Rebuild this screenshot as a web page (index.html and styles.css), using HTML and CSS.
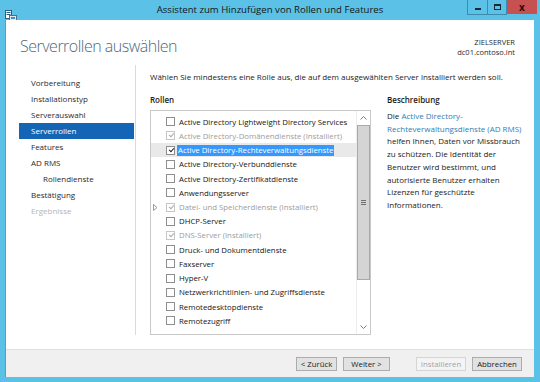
FILE: index.html
```html
<!DOCTYPE html>
<html lang="de">
<head>
    <meta charset="UTF-8">
    <meta name="viewport" content="width=device-width, initial-scale=1.0">
    <title>Assistent zum Hinzufügen von Rollen und Features</title>
    <link rel="stylesheet" href="styles.css">
</head>
<body>
    <div class="window">
        <div class="titlebar">
            <div class="app-icon">
                <svg width="12" height="11" viewBox="0 0 12 11">
                    <rect x="0.5" y="0.5" width="6" height="8" fill="#ffffff" stroke="#2a5f86"/>
                    <rect x="1.5" y="2" width="4" height="1" fill="#2a5f86"/>
                    <rect x="1.5" y="4" width="4" height="1" fill="#2a5f86"/>
                    <rect x="4.5" y="5.5" width="7" height="5" fill="#e8e8e8" stroke="#4b6f8c"/>
                    <rect x="6" y="7" width="4" height="2" fill="#3d8fc9"/>
                </svg>
            </div>
            <div class="title">Assistent zum Hinzufügen von Rollen und Features</div>
            <div class="caption-buttons">
                <span class="cap-btn cap-min"><i></i></span>
                <span class="cap-btn cap-max"><i></i></span>
                <span class="cap-btn cap-close">x</span>
            </div>
        </div>

        <div class="client">
            <div class="header">
                <h1>Serverrollen auswählen</h1>
                <div class="target">
                    <div>ZIELSERVER</div>
                    <div>dc01.contoso.int</div>
                </div>
            </div>

            <div class="main">
                <ul class="nav">
                    <li>Vorbereitung</li>
                    <li>Installationstyp</li>
                    <li>Serverauswahl</li>
                    <li class="active">Serverrollen</li>
                    <li>Features</li>
                    <li>AD RMS</li>
                    <li class="sub">Rollendienste</li>
                    <li>Bestätigung</li>
                    <li class="disabled">Ergebnisse</li>
                </ul>

                <div class="content">
                    <p class="intro">Wählen Sie mindestens eine Rolle aus, die auf dem ausgewählten Server installiert werden soll.</p>
                    <div class="columns">
                        <div class="roles">
                            <div class="section-label">Rollen</div>
                            <div class="listbox">
                                <ul class="role-list">
                                    <li><span class="expander"></span><span class="check"></span><span class="role-name">Active Directory Lightweight Directory Services</span></li>
                                    <li class="installed"><span class="expander"></span><span class="check checked"></span><span class="role-name">Active Directory-Domänendienste (Installiert)</span></li>
                                    <li class="selected"><span class="expander"></span><span class="check checked"></span><span class="role-name">Active Directory-Rechteverwaltungsdienste</span></li>
                                    <li><span class="expander"></span><span class="check"></span><span class="role-name">Active Directory-Verbunddienste</span></li>
                                    <li><span class="expander"></span><span class="check"></span><span class="role-name">Active Directory-Zertifikatdienste</span></li>
                                    <li><span class="expander"></span><span class="check"></span><span class="role-name">Anwendungsserver</span></li>
                                    <li class="installed"><span class="expander">
                                        <svg width="5" height="7" viewBox="0 0 5 7"><path d="M0.5 0.5 L4 3.5 L0.5 6.5 Z" fill="none" stroke="#9a9a9a"/></svg>
                                    </span><span class="check checked"></span><span class="role-name">Datei- und Speicherdienste (Installiert)</span></li>
                                    <li><span class="expander"></span><span class="check"></span><span class="role-name">DHCP-Server</span></li>
                                    <li class="installed"><span class="expander"></span><span class="check checked"></span><span class="role-name">DNS-Server (Installiert)</span></li>
                                    <li><span class="expander"></span><span class="check"></span><span class="role-name">Druck- und Dokumentdienste</span></li>
                                    <li><span class="expander"></span><span class="check"></span><span class="role-name">Faxserver</span></li>
                                    <li><span class="expander"></span><span class="check"></span><span class="role-name">Hyper-V</span></li>
                                    <li><span class="expander"></span><span class="check"></span><span class="role-name">Netzwerkrichtlinien- und Zugriffsdienste</span></li>
                                    <li><span class="expander"></span><span class="check"></span><span class="role-name">Remotedesktopdienste</span></li>
                                    <li><span class="expander"></span><span class="check"></span><span class="role-name">Remotezugriff</span></li>
                                </ul>
                                <div class="scrollbar">
                                    <div class="sb-arrow">
                                        <svg width="7" height="4" viewBox="0 0 7 4"><path d="M0.5 3.5 L3.5 0.5 L6.5 3.5" fill="none" stroke="#7a7a7a"/></svg>
                                    </div>
                                    <div class="sb-track">
                                        <div class="sb-thumb"><span class="grip"></span></div>
                                    </div>
                                    <div class="sb-arrow">
                                        <svg width="7" height="4" viewBox="0 0 7 4"><path d="M0.5 0.5 L3.5 3.5 L6.5 0.5" fill="none" stroke="#7a7a7a"/></svg>
                                    </div>
                                </div>
                            </div>
                        </div>
                        <div class="desc">
                            <div class="section-label">Beschreibung</div>
                            <p>Die <span class="link">Active Directory-</span><span class="link">Rechteverwaltungsdienste (AD RMS)</span> helfen Ihnen, Daten vor Missbrauch zu schützen. Die Identität der Benutzer wird bestimmt, und autorisierte Benutzer erhalten Lizenzen für geschützte Informationen.</p>
                        </div>
                    </div>
                </div>
            </div>

            <div class="footer">
                <button type="button">&lt; Zurück</button>
                <button type="button" class="btn-next">Weiter &gt;</button>
                <button type="button" class="btn-install" disabled>Installieren</button>
                <button type="button">Abbrechen</button>
            </div>
        </div>
    </div>
</body>
</html>
```

FILE: styles.css
```css
body {
    margin: 0;
    padding: 0;
    font-family: "Open Sans", "Noto Sans", sans-serif;
    color: #1e1e1e;
}

.window {
    width: 540px;
    height: 382px;
    background-color: #5bc1e7;
    display: flex;
    flex-direction: column;
    overflow: hidden;
}

/* title bar */
.titlebar {
    height: 20px;
    display: grid;
    grid-template-columns: 1fr auto 1fr;
    align-items: start;
}

.app-icon {
    padding: 4px 0 0 5px;
}

.title {
    font-size: 9.6px;
    line-height: 20px;
    color: #151515;
}

.caption-buttons {
    display: flex;
    justify-content: flex-end;
    padding-right: 3px;
}

.cap-btn {
    height: 14px;
    border: 1px solid #3d8cb0;
    border-top: none;
    display: flex;
    align-items: center;
    justify-content: center;
}

.cap-min {
    width: 19px;
}

.cap-min i {
    width: 6px;
    height: 2px;
    margin-top: 3px;
    background-color: #1b2a33;
}

.cap-max {
    width: 18px;
    border-left: none;
}

.cap-max i {
    width: 5px;
    height: 3px;
    border: 1px solid #1b2a33;
    border-top-width: 2px;
}

.cap-close {
    width: 30px;
    border: none;
    background-color: #c75050;
    color: #2a0d0d;
    font-size: 10px;
    font-weight: bold;
    line-height: 14px;
}

/* client area */
.client {
    flex: 1;
    margin: 0 6px 5px 6px;
    background-color: #fff;
    display: flex;
    flex-direction: column;
    box-shadow: -1px 0 0 #4aa2c9;
}

.header {
    height: 45px;
    display: flex;
    justify-content: space-between;
    align-items: flex-start;
}

.header h1 {
    margin: 14px 0 0 14px;
    font-size: 16px;
    font-weight: 300;
    letter-spacing: -0.5px;
    line-height: 24px;
    color: #4c6a7c;
}

.target {
    margin: 17px 19px 0 0;
    text-align: right;
    font-size: 7.5px;
    line-height: 10px;
    color: #2a2a2a;
}

.main {
    flex: 1;
    display: flex;
    padding-bottom: 14px;
}

/* left navigation */
.nav {
    list-style: none;
    margin: 0;
    padding: 10px 1px 0 13px;
    width: 115px;
    border-right: 1px solid #dadada;
}

.nav li {
    height: 16px;
    line-height: 16px;
    padding-left: 12px;
    font-size: 8px;
    color: #2a2a2a;
}

.nav li.active {
    background-color: #1565b6;
    color: #fff;
}

.nav li.sub {
    padding-left: 24px;
}

.nav li.disabled {
    color: #b5b5b5;
}

/* main content */
.content {
    flex: 1;
    padding: 6px 0 0 14px;
    display: flex;
    flex-direction: column;
}

.intro {
    margin: 0;
    font-size: 8px;
    line-height: 12px;
    color: #222;
}

.columns {
    flex: 1;
    display: flex;
    margin-top: 11px;
}

.section-label {
    font-size: 8px;
    font-weight: 600;
    line-height: 12px;
    height: 16px;
    color: #1a1a1a;
}

.roles {
    width: 221px;
    display: flex;
    flex-direction: column;
}

.listbox {
    flex: 1;
    border: 1px solid #c8c8c8;
    display: flex;
    overflow: hidden;
}

.role-list {
    flex: 1;
    list-style: none;
    margin: 0;
    padding: 3.5px 0 0 0;
}

.role-list li {
    height: 14.24px;
    display: flex;
    align-items: center;
    font-size: 7.8px;
    color: #151515;
    white-space: nowrap;
}

.role-list li.installed {
    color: #9c9c9c;
}

.role-list li.selected {
    background-color: #e9e9e9;
}

.role-list li.selected .role-name {
    background-color: #3399ff;
    color: #fff;
    padding: 0 1px;
    margin-left: 2px;
    line-height: 11px;
}

.expander {
    width: 15px;
    display: flex;
    align-items: center;
    padding-left: 2px;
    box-sizing: border-box;
}

.check {
    width: 9px;
    height: 9px;
    border: 1px solid #8e8e8e;
    background-color: #fff;
    box-sizing: border-box;
    position: relative;
    flex-shrink: 0;
}

.check.checked::after {
    content: "";
    position: absolute;
    left: 1.5px;
    top: 1px;
    width: 4px;
    height: 2px;
    border-left: 1.2px solid #1e1e1e;
    border-bottom: 1.2px solid #1e1e1e;
    transform: rotate(-48deg);
}

.installed .check {
    border-color: #c6c6c6;
}

.installed .check.checked::after {
    border-color: #a8a8a8;
}

.role-name {
    margin-left: 4px;
    line-height: 12px;
}

/* scrollbar */
.scrollbar {
    width: 13px;
    display: flex;
    flex-direction: column;
    border-left: 1px solid #ececec;
}

.sb-arrow {
    height: 14px;
    display: flex;
    align-items: center;
    justify-content: center;
}

.sb-track {
    flex: 1;
}

.sb-thumb {
    height: 155px;
    background-color: #d4d4d4;
    border: 1px solid #a9a9a9;
    box-sizing: border-box;
    display: flex;
    align-items: center;
    justify-content: center;
}

.grip {
    width: 5px;
    height: 5px;
    background: repeating-linear-gradient(#6f6f6f 0 1px, transparent 1px 2px);
}

/* description */
.desc {
    flex: 1;
    padding-left: 16px;
    padding-right: 6px;
}

.desc p {
    margin: 0;
    font-size: 8px;
    line-height: 12.7px;
    color: #222;
}

.link {
    color: #2e80b6;
}

/* footer */
.footer {
    height: 28px;
    box-sizing: border-box;
    background-color: #f0f0f0;
    border-top: 1px solid #dfdfdf;
    display: flex;
    justify-content: flex-end;
    align-items: center;
    padding-right: 12px;
    gap: 6px;
}

.footer button {
    height: 14px;
    padding: 0;
    width: 48px;
    font-family: inherit;
    font-size: 7.8px;
    line-height: 12px;
    color: #1a1a1a;
    background-color: #e2e2e2;
    border: 1px solid #acacac;
}

.footer button:first-child {
    width: 41px;
}

.footer .btn-next {
    width: 47px;
    margin-right: 20px;
}

.footer .btn-install {
    width: 50px;
    color: #a3a3a3;
    background-color: #f4f4f4;
    border-color: #d5d5d5;
}

.footer button:last-child {
    width: 50px;
}
```
